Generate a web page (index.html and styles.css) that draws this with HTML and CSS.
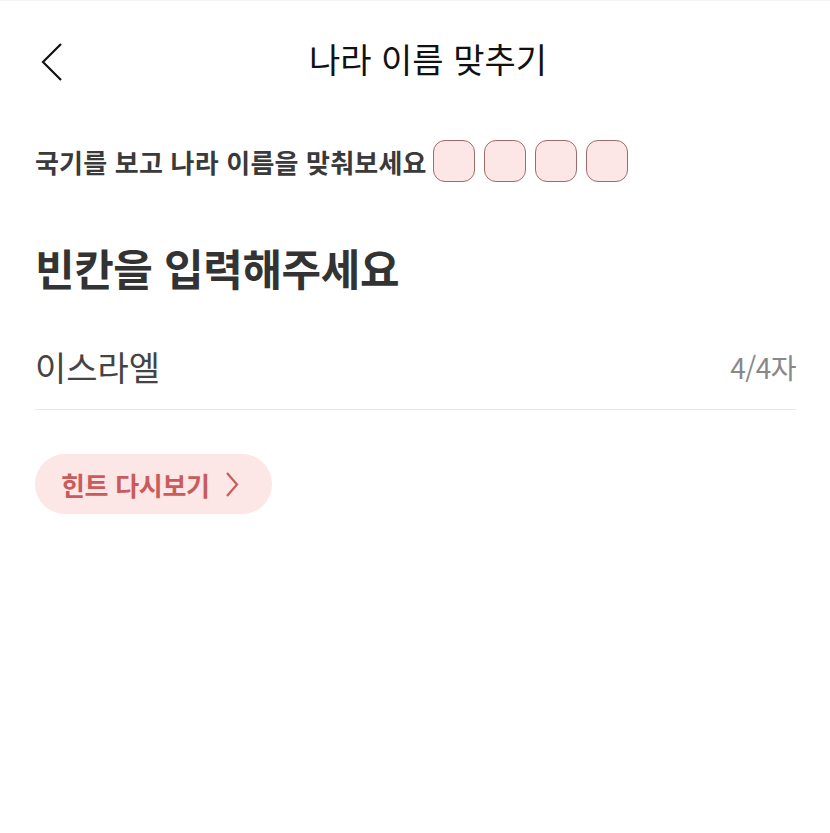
FILE: index.html
```html
<!DOCTYPE html>
<html lang="ko">
<head>
  <meta charset="UTF-8" />
  <meta name="viewport" content="width=device-width, initial-scale=1.0"/>
  <title>나라 이름 맞추기</title>
  <link rel="stylesheet" href="styles.css">
</head>
<body>
  <header class="top-bar">
    <button class="back-btn" aria-label="뒤로">
      <svg width="22" height="38" viewBox="0 0 22 38">
        <polyline points="20,1 2,19 20,37" fill="none" stroke="#111" stroke-width="2.2"/>
      </svg>
    </button>
    <h1 class="title">나라 이름 맞추기</h1>
  </header>

  <main class="content">
    <div class="question">
      <span class="question-text">국기를 보고 나라 이름을 맞춰보세요</span>
      <div class="flag-slots">
        <span class="slot"></span>
        <span class="slot"></span>
        <span class="slot"></span>
        <span class="slot"></span>
      </div>
    </div>

    <h2 class="prompt">빈칸을 입력해주세요</h2>

    <div class="answer-row">
      <span class="answer">이스라엘</span>
      <span class="counter">4/4자</span>
    </div>

    <button class="hint-btn">
      힌트 다시보기
      <svg width="14" height="25" viewBox="0 0 14 25">
        <polyline points="2,1 12,12.5 2,24" fill="none" stroke="#c85c5c" stroke-width="2.2"/>
      </svg>
    </button>
  </main>
</body>
</html>
```

FILE: styles.css
```css
/* Base */
body {
  margin: 0;
  background: #ffffff;
  font-family: "Noto Sans CJK KR", "Noto Sans", sans-serif;
  color: #222;
  border-top: 1px solid #f3f3f3;
}

/* Top bar */
.top-bar {
  position: relative;
  display: flex;
  align-items: center;
  justify-content: center;
  height: 120px;
}

.back-btn {
  position: absolute;
  left: 41px;
  top: 42px;
  background: none;
  border: none;
  padding: 0;
  display: flex;
}

.title {
  margin: 0 0 5px 26px;
  font-size: 34px;
  font-weight: 400;
  color: #111;
}

/* Content */
.content {
  padding: 0 34px 0 35px;
}

.question {
  display: flex;
  align-items: center;
  gap: 6px;
  height: 80px;
}

.question-text {
  font-size: 26px;
  font-weight: 700;
  color: #3a3a3a;
  letter-spacing: 0.2px;
}

.flag-slots {
  display: flex;
  gap: 9px;
}

.slot {
  width: 40px;
  height: 40px;
  background: #fde6e6;
  border: 1.5px solid #a06c6a;
  border-radius: 12px;
}

.prompt {
  margin: 38px 0 0;
  font-size: 43px;
  font-weight: 700;
  color: #333;
  letter-spacing: -0.4px;
  line-height: 56px;
}

.answer-row {
  display: flex;
  justify-content: space-between;
  align-items: center;
  margin-top: 47px;
  padding-bottom: 18px;
  border-bottom: 1px solid #e8e8e8;
}

.answer {
  font-size: 34px;
  color: #444;
}

.counter {
  font-size: 28px;
  color: #888;
  letter-spacing: -0.5px;
}

/* Hint button */
.hint-btn {
  display: flex;
  align-items: center;
  gap: 15px;
  margin-top: 44px;
  height: 60px;
  padding: 0 33px 0 26px;
  background: #fde6e6;
  border: none;
  border-radius: 30px;
  font-family: inherit;
  font-size: 26px;
  font-weight: 700;
  color: #c85c5c;
  letter-spacing: -0.3px;
}
```
